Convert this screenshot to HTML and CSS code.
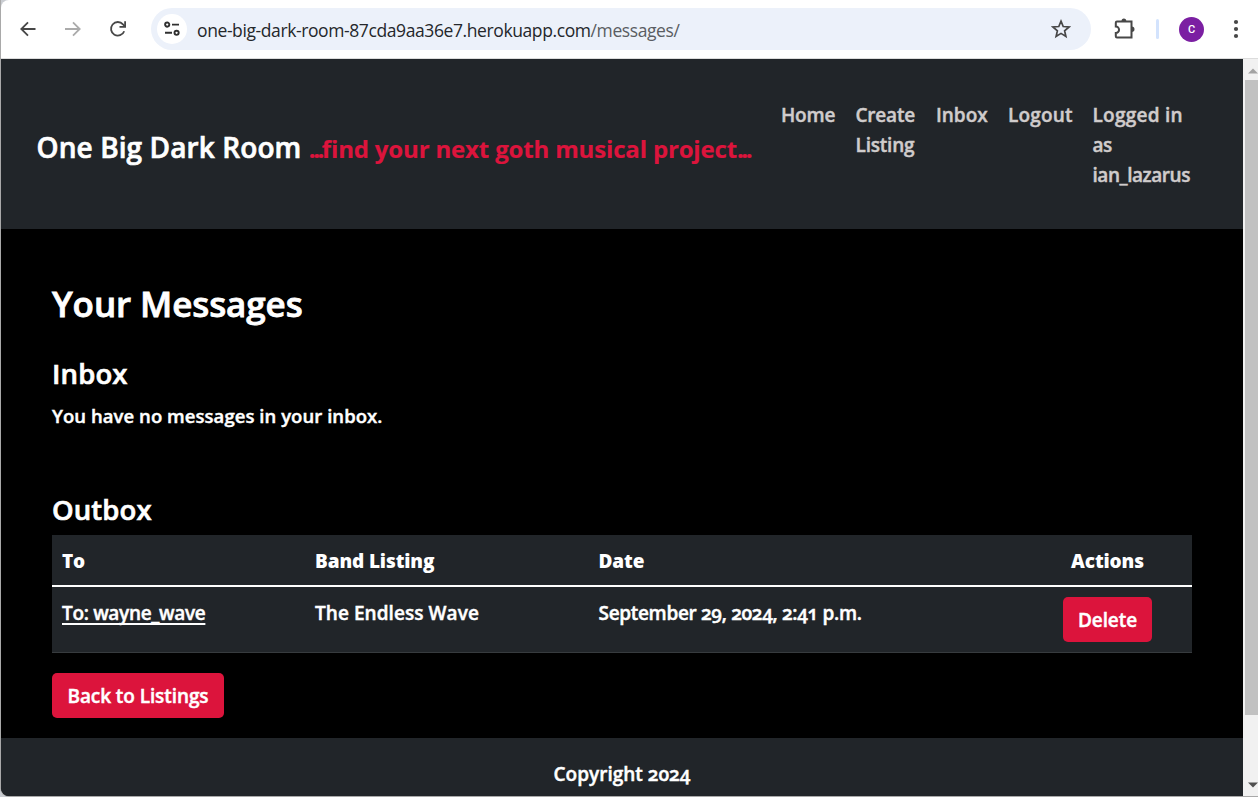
FILE: index.html
```html
<!DOCTYPE html>
<html lang="en">
<head>
<meta charset="utf-8">
<title>One Big Dark Room</title>
<link rel="stylesheet" href="styles.css">
</head>
<body>
<div class="window">
  <div class="toolbar">
    <svg class="ico back" viewBox="0 0 18 18"><path d="M16.5 9H2.5M9 2.3 2.3 9 9 15.7"/></svg>
    <svg class="ico forward" viewBox="0 0 18 18"><path d="M1 9h14.5M9 2.3 15.7 9 9 15.7"/></svg>
    <svg class="ico reload" viewBox="0 0 18 18"><path d="M15.2 11.2A6.8 6.8 0 1 1 14 4.4L16 6.5"/><path d="M16.1 1.2v5.7h-5.6"/></svg>
    <div class="address">
      <span class="site-info"><svg viewBox="0 0 18 18"><circle cx="4.2" cy="4.6" r="2.1"/><path d="M9 4.6h7M2 12.8h7"/><circle cx="13.6" cy="12.8" r="2.1"/></svg></span>
      <span class="url">one-big-dark-room-87cda9aa36e7.herokuapp.com<span class="path">/messages/</span></span>
      <svg class="star" viewBox="0 0 20 20"><path d="M10 2.2l2.2 5.3 5.8.5-4.4 3.8 1.3 5.6L10 14.4l-4.9 3 1.3-5.6L2 8l5.8-.5z"/></svg>
    </div>
    <svg class="puzzle" viewBox="0 0 22 22"><path d="M3 3.5h14.500v16H3q-1.200 0-1.200-1.200v-3.300a3.200 3.200 0 0 0 0-6.500V4.700Q1.800 3.500 3 3.500z"/><path class="fill" d="M7.500 3.200a2.400 2.600 0 0 1 4.800 0zM17.800 8.600a2.700 2.700 0 0 1 0 5.400z"/></svg>
    <span class="divider"></span>
    <span class="avatar">C</span>
    <svg class="more" viewBox="0 0 6 20"><circle cx="3" cy="3" r="2.100"/><circle cx="3" cy="10" r="2.100"/><circle cx="3" cy="17" r="2.100"/></svg>
  </div>
  <div class="viewport">
    <div class="page">
      <header class="site-header">
        <div class="brand">One Big Dark Room <span class="tagline"><span class="dots">...</span>find your next goth musical project<span class="dots">...</span></span></div>
        <nav class="nav">
          <a class="n-home">Home</a>
          <a class="n-create">Create<br>Listing</a>
          <a class="n-inbox">Inbox</a>
          <a class="n-logout">Logout</a>
          <a class="n-user"><span class="wide">Logged in</span><br>as<br>ian_lazarus</a>
        </nav>
      </header>
      <main class="content">
        <h1>Your Messages</h1>
        <h2 class="inbox">Inbox</h2>
        <p class="empty">You have no messages in your inbox.</p>
        <h2 class="outbox">Outbox</h2>
        <table class="messages">
          <colgroup><col class="c-to"><col class="c-band"><col class="c-date"><col class="c-actions"></colgroup>
          <thead><tr><th>To</th><th>Band Listing</th><th>Date</th><th class="center">Actions</th></tr></thead>
          <tbody><tr><td><a class="link">To: wayne_wave</a></td><td class="band">The Endless Wave</td><td>September 29, 2024, 2:41 p.m.</td><td class="center"><button class="btn delete">Delete</button></td></tr></tbody>
        </table>
        <a class="btn listings">Back to Listings</a>
      </main>
      <footer class="site-footer">Copyright 2024</footer>
    </div>
    <div class="scrollbar">
      <svg class="arrow up" viewBox="0 0 10 6"><path d="M0 5.500 5 .5l5 5z"/></svg>
      <span class="thumb"></span>
      <svg class="arrow down" viewBox="0 0 10 6"><path d="M0 .5 5 5.500l5-5z"/></svg>
    </div>
  </div>
</div>
</body>
</html>
```
FILE: styles.css
```css
* { box-sizing: border-box; }
body { margin: 0; background: #c9ccd1; overflow: hidden; }
.window {
  width: 1258px; height: 797px;
  display: flex; flex-direction: column;
  border-left: 1px solid #a9a9a9;
  border-bottom: 1px solid #a9a9a9;
  border-radius: 0 0 0 9px;
  overflow: hidden;
}

/* Browser toolbar */
.toolbar {
  flex: none; height: 59px;
  display: flex; align-items: center;
  background: #fff;
  border-bottom: 1px solid #dcdcdc;
  border-top-left-radius: 8px;
}
.ico { width: 18px; height: 18px; flex: none; fill: none; stroke: #474747; stroke-width: 1.8; }
.back { margin-left: 18px; }
.forward { margin-left: 27px; stroke: #ababab; }
.reload { margin-left: 27px; }
.address {
  width: 940px; height: 42px; margin-left: 24px;
  display: flex; align-items: center;
  padding-left: 6px;
  background: #ecf1fa; border-radius: 21px;
}
.site-info {
  width: 30px; height: 30px; border-radius: 50%;
  display: flex; align-items: center; justify-content: center;
  background: #fff;
}
.site-info svg { width: 18px; height: 18px; fill: none; stroke: #303030; stroke-width: 1.9; }
.url {
  width: 854px; margin-left: 10px; padding-top: 1px;
  font: 400 17.5px/24px "Open Sans", sans-serif;
  letter-spacing: -0.4px; color: #24272b; white-space: nowrap;
}
.path { color: #5a5d62; }
.star { width: 20px; height: 20px; fill: none; stroke: #474747; stroke-width: 1.7; }
.puzzle { width: 22px; height: 22px; margin-left: 23px; fill: none; stroke: #474747; stroke-width: 2; }
.puzzle .fill { fill: #474747; stroke: none; }
.divider { width: 3px; height: 20px; margin-left: 20px; background: #d3e3fd; border-radius: 2px; }
.avatar {
  width: 25px; height: 25px; margin-left: 20px; border-radius: 50%;
  background: #7b1fa2; color: #fff;
  font: 500 11px/25px Roboto, sans-serif; text-align: center;
}
.more { width: 6px; height: 20px; margin-left: 29px; fill: #474747; }

/* Page */
.viewport { flex: 1; display: flex; min-height: 0; }
.page {
  width: 1242px; flex: none; overflow: hidden;
  background: #000; color: #fff;
  font: 600 19px/30px "Open Sans", sans-serif;
  font-variant-numeric: oldstyle-nums;
  font-variant-ligatures: none;
  -webkit-text-stroke: .45px currentColor;
}
.site-header {
  height: 170px; padding: 41px 0 39px 35.5px;
  display: flex; justify-content: space-between;
  background: #212529;
}
.brand { padding-top: 30px; font-size: 28px; line-height: 34px; letter-spacing: .1px; white-space: nowrap; -webkit-text-stroke-width: .65px; }
.tagline { font-size: 24px; font-weight: 700; letter-spacing: -.16px; color: #dc143c; -webkit-text-stroke-width: .2px; }
.dots { letter-spacing: -2.5px; }
.nav { display: grid; grid-template-columns: 74.5px 80.5px 72px 84.5px 150.5px; color: #d0cccc; }
.n-home { letter-spacing: -.2px; }
.n-create { letter-spacing: -.2px; }
.n-logout { letter-spacing: .2px; }
.n-user { letter-spacing: -.45px; }
.wide { letter-spacing: .25px; }

.content { height: 509px; padding: 53px 51px 0; }
h1 { margin: 0; font-size: 35px; line-height: 44px; font-weight: 600; letter-spacing: -.1px; -webkit-text-stroke-width: .8px; }
h2 { margin: 0; font-size: 27.5px; line-height: 34px; font-weight: 600; -webkit-text-stroke-width: .65px; }
.inbox { margin-top: 31px; letter-spacing: .15px; }
.empty { margin: 10px 0 0; font-size: 18.5px; letter-spacing: .05px; }
.outbox { margin-top: 62px; letter-spacing: .1px; }
.messages {
  width: 1140px; margin-top: 8px;
  table-layout: fixed; border-collapse: separate; border-spacing: 0;
  background: #212529;
}
.c-to { width: 253px; }
.c-band { width: 283.5px; }
.c-date { width: 434.5px; }
.c-actions { width: 169px; }
th { height: 52px; padding: 11px 10px 9px; text-align: left; font-weight: 800; letter-spacing: -.12px; border-bottom: 2px solid #fff; -webkit-text-stroke-width: 0; }
td { height: 66px; padding: 11px 10px 9px; vertical-align: top; letter-spacing: -.32px; border-bottom: 1px solid #373b3e; }
td.center { padding-top: 10px; }
.band { letter-spacing: .06px; }
.center { text-align: center; }
.link { text-decoration: underline; text-decoration-thickness: 1.5px; text-underline-offset: 3px; text-decoration-skip-ink: none; }
.btn {
  display: block; height: 45px; padding: 0; border: 0; border-radius: 5px;
  background: #dc143c; color: #fff;
  font: inherit; line-height: 46px; letter-spacing: -.08px; text-align: center;
}
.delete { width: 89px; margin: 0 auto; }
.listings { width: 172px; margin-top: 20px; }
.site-footer { height: 60px; padding-top: 21px; background: #212529; text-align: center; }

/* Scrollbar */
.scrollbar {
  flex: 1; display: flex; flex-direction: column;
  padding-left: 2px; background: #f1f1f1;
}
.arrow { width: 10px; height: 6px; margin-left: 3px; flex: none; }
.up { margin-top: 9px; fill: #a3a3a3; }
.thumb { height: 635px; margin-top: 6px; background: #c1c1c1; }
.down { margin-top: 67px; fill: #505050; }
```
